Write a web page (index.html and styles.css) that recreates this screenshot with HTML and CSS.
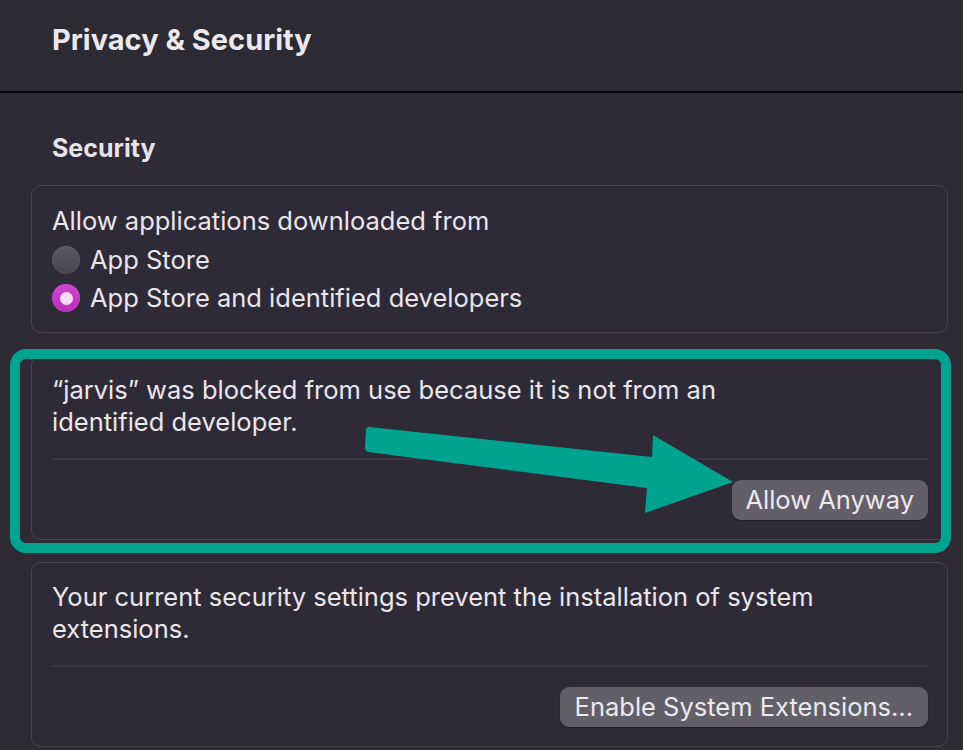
FILE: index.html
```html
<!DOCTYPE html>
<html lang="en">
<head>
<meta charset="utf-8">
<title>Privacy &amp; Security</title>
<link rel="stylesheet" href="styles.css">
</head>
<body>
<header class="titlebar">
  <h1 class="title">Privacy &amp; Security</h1>
</header>
<main class="content">
  <h2 class="section-title">Security</h2>

  <section class="card card-sources">
    <p class="label">Allow applications downloaded from</p>
    <div class="radio-row">
      <span class="radio"></span>
      <span class="radio-label">App Store</span>
    </div>
    <div class="radio-row">
      <span class="radio radio-on"></span>
      <span class="radio-label">App Store and identified developers</span>
    </div>
  </section>

  <section class="card card-action">
    <p class="message">“jarvis” was blocked from use because it is not from an<br>identified developer.</p>
    <div class="divider"></div>
    <div class="actions"><button class="btn btn-narrow">Allow Anyway</button></div>
  </section>

  <section class="card card-action">
    <p class="message">Your current security settings prevent the installation of system<br>extensions.</p>
    <div class="divider"></div>
    <div class="actions"><button class="btn">Enable System Extensions...</button></div>
  </section>
</main>

<div class="highlight"></div>
<svg class="arrow" width="963" height="750" viewBox="0 0 963 750">
  <path d="M369 427 L652 457 L653 435 L733 482 L645 513 L647 488 L368 452 Q365 451 365 447 L366 431 Q366 427 369 427 Z" fill="#00a38f"/>
</svg>
</body>
</html>
```

FILE: styles.css
```css
* { box-sizing: border-box; }

html, body {
  margin: 0;
  padding: 0;
}

body {
  width: 963px;
  height: 750px;
  overflow: hidden;
  background: #2e2a36;
  color: #e9e7ec;
  font-family: "Inter", "Noto Sans", sans-serif;
  position: relative;
}

.titlebar {
  height: 93px;
  background: #2c2a32;
  border-bottom: 2px solid #0b0a0d;
  padding-left: 52px;
  padding-top: 20px;
}

.title {
  margin: 0;
  font-size: 29px;
  font-weight: 700;
  line-height: 40px;
  color: #ebe9ee;
}

.content {
  padding: 0 15px 0 31px;
}

.section-title {
  margin: 0;
  padding: 38px 0 0 21px;
  height: 92px;
  font-size: 25px;
  font-weight: 700;
  line-height: 34px;
  color: #e6e4e9;
}

.card {
  border: 1px solid #4a4651;
  border-radius: 10px;
  background: #2f2a37;
  padding: 0 19px 0 20px;
}

.card + .card {
  margin-top: 22px;
}

.card-sources {
  height: 148px;
  padding-top: 19px;
}

.label,
.message,
.radio-label {
  margin: 0;
  font-size: 25.5px;
  line-height: 32px;
}

.radio-row {
  display: flex;
  align-items: center;
  gap: 10px;
  height: 38px;
}

.radio-row:first-of-type {
  margin-top: 4px;
}

.radio {
  width: 28px;
  height: 28px;
  border-radius: 50%;
  background: linear-gradient(#5c5962, #48454d);
  box-shadow: inset 0 0 0 1px rgba(255,255,255,0.05);
  flex: none;
  display: flex;
  align-items: center;
  justify-content: center;
}

.radio-on {
  background: linear-gradient(#cf45cf, #b82fbb);
}

.radio-on::after {
  content: "";
  width: 13px;
  height: 13px;
  border-radius: 50%;
  background: #f7dcf7;
}

.card-action {
  height: 185px;
  padding-top: 18px;
}

.divider {
  height: 2px;
  background: #3b3742;
  margin-top: 20px;
}

.actions {
  display: flex;
  justify-content: flex-end;
  margin-top: 20px;
}

.btn {
  font-family: inherit;
  font-size: 25.5px;
  color: #ece9ef;
  background: #635f69;
  border: none;
  border-radius: 9px;
  height: 40px;
  padding: 0 15px;
  line-height: 40px;
  box-shadow: 0 1px 1px rgba(0,0,0,0.3);
}

.btn-narrow {
  padding: 0 14px 0 13px;
}

.highlight {
  position: absolute;
  left: 10px;
  top: 349px;
  width: 941px;
  height: 204px;
  border: 10px solid #00a38f;
  border-radius: 16px;
}

.arrow {
  position: absolute;
  left: 0;
  top: 0;
}
```
